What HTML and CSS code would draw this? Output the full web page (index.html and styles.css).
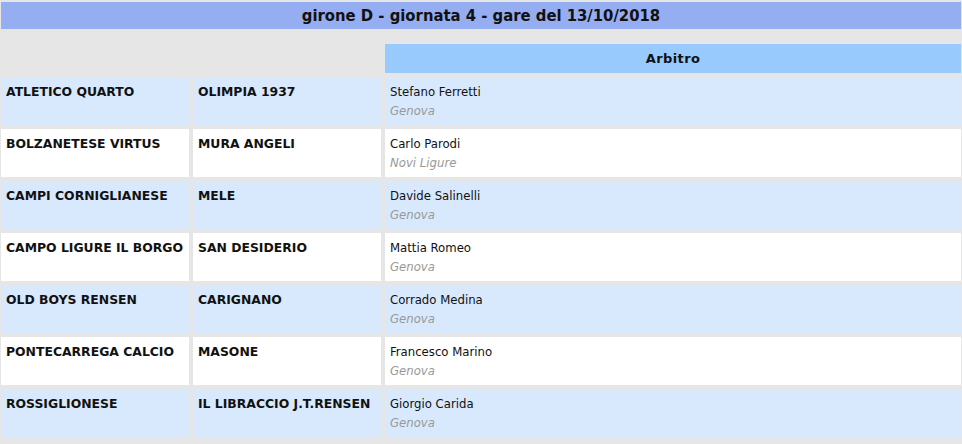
FILE: index.html
```html
<!DOCTYPE html>
<html lang="it">
<head>
<meta charset="utf-8">
<title>girone D - giornata 4</title>
<link rel="stylesheet" href="styles.css">
</head>
<body>
<div class="page">
  <div class="title">girone D - giornata 4 - gare del 13/10/2018</div>
  <div class="grid">
    <div class="hcell empty"></div>
    <div class="hcell empty"></div>
    <div class="hcell arb">Arbitro</div>

    <div class="cell team alt">ATLETICO QUARTO</div>
    <div class="cell team alt">OLIMPIA 1937</div>
    <div class="cell ref alt"><div class="name">Stefano Ferretti</div><div class="city">Genova</div></div>

    <div class="cell team">BOLZANETESE VIRTUS</div>
    <div class="cell team">MURA ANGELI</div>
    <div class="cell ref"><div class="name">Carlo Parodi</div><div class="city">Novi Ligure</div></div>

    <div class="cell team alt">CAMPI CORNIGLIANESE</div>
    <div class="cell team alt">MELE</div>
    <div class="cell ref alt"><div class="name">Davide Salinelli</div><div class="city">Genova</div></div>

    <div class="cell team">CAMPO LIGURE IL BORGO</div>
    <div class="cell team">SAN DESIDERIO</div>
    <div class="cell ref"><div class="name">Mattia Romeo</div><div class="city">Genova</div></div>

    <div class="cell team alt">OLD BOYS RENSEN</div>
    <div class="cell team alt">CARIGNANO</div>
    <div class="cell ref alt"><div class="name">Corrado Medina</div><div class="city">Genova</div></div>

    <div class="cell team">PONTECARREGA CALCIO</div>
    <div class="cell team">MASONE</div>
    <div class="cell ref"><div class="name">Francesco Marino</div><div class="city">Genova</div></div>

    <div class="cell team alt">ROSSIGLIONESE</div>
    <div class="cell team alt">IL LIBRACCIO J.T.RENSEN</div>
    <div class="cell ref alt"><div class="name">Giorgio Carida</div><div class="city">Genova</div></div>
  </div>
</div>
</body>
</html>
```
FILE: styles.css
```css
html, body {
  margin: 0;
  padding: 0;
  background: #e6e6e6;
}
body {
  font-family: "DejaVu Sans", Verdana, sans-serif;
  color: #000;
}
.page {
  padding: 2px 1px 0 1px;
}
.title {
  height: 27px;
  line-height: 27px;
  background: #95adf1;
  text-align: center;
  font-family: "DejaVu Sans Condensed", "DejaVu Sans", sans-serif;
  font-weight: bold;
  font-size: 16.5px;
  color: #111;
}
.grid {
  display: grid;
  grid-template-columns: 188px 188px 1fr;
  grid-template-rows: 29px repeat(7, 48px);
  gap: 4px;
  margin-top: 15px;
}
.arb {
  background: #98cafe;
  text-align: center;
  font-weight: bold;
  font-size: 13px;
  letter-spacing: 0.4px;
  line-height: 29px;
  color: #111;
}
.cell {
  background: #ffffff;
  padding: 7px 5px 0 5px;
  box-sizing: border-box;
}
.cell.alt {
  background: #d8e9fd;
}
.team {
  font-weight: bold;
  font-size: 12.4px;
  line-height: 16px;
  color: #111;
}
.ref {
  padding-top: 5px;
  font-family: "DejaVu Sans Condensed", "DejaVu Sans", sans-serif;
  font-size: 13px;
  line-height: 19px;
  color: #111;
}
.city {
  color: #999;
  font-style: italic;
}
```
